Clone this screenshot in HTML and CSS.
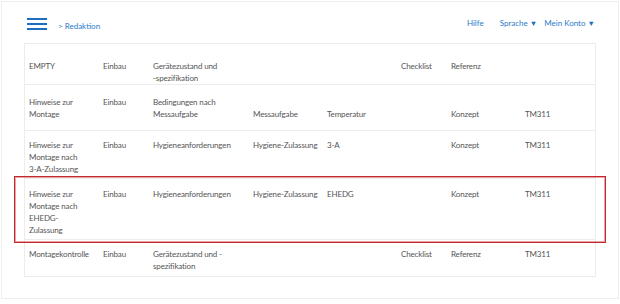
FILE: index.html
```html
<!DOCTYPE html>
<html lang="de">
<head>
<meta charset="utf-8">
<title>Redaktion</title>
<link rel="stylesheet" href="styles.css">
</head>
<body>
<div class="frame">
  <header class="topbar">
    <button class="burger" aria-label="Menü"><span></span><span></span><span></span></button>
    <nav class="crumb">&gt; Redaktion</nav>
    <nav class="menu">
      <a class="link hilfe">Hilfe</a>
      <a class="link sprache">Sprache <span class="caret">&#9660;</span></a>
      <a class="link konto">Mein Konto <span class="caret">&#9660;</span></a>
    </nav>
  </header>
  <div class="table">
    <div class="row r1">
      <div class="c">EMPTY</div>
      <div class="c">Einbau</div>
      <div class="c">Gerätezustand und <span class="nw">-spezifikation</span></div>
      <div class="c"></div>
      <div class="c"></div>
      <div class="c">Checklist</div>
      <div class="c">Referenz</div>
      <div class="c"></div>
    </div>
    <div class="row r2">
      <div class="c">Hinweise zur Montage</div>
      <div class="c">Einbau</div>
      <div class="c">Bedingungen nach Messaufgabe</div>
      <div class="c low">Messaufgabe</div>
      <div class="c low">Temperatur</div>
      <div class="c"></div>
      <div class="c low">Konzept</div>
      <div class="c low">TM311</div>
    </div>
    <div class="row r3">
      <div class="c">Hinweise zur Montage nach <span class="nw">3-A-Zulassung</span></div>
      <div class="c">Einbau</div>
      <div class="c">Hygieneanforderungen</div>
      <div class="c nw">Hygiene-Zulassung</div>
      <div class="c">3-A</div>
      <div class="c"></div>
      <div class="c">Konzept</div>
      <div class="c">TM311</div>
    </div>
    <div class="row r4 selected">
      <div class="c">Hinweise zur Montage nach EHEDG-Zulassung</div>
      <div class="c">Einbau</div>
      <div class="c">Hygieneanforderungen</div>
      <div class="c nw">Hygiene-Zulassung</div>
      <div class="c">EHEDG</div>
      <div class="c"></div>
      <div class="c">Konzept</div>
      <div class="c">TM311</div>
    </div>
    <div class="row r5">
      <div class="c">Montagekontrolle</div>
      <div class="c">Einbau</div>
      <div class="c">Gerätezustand und - spezifikation</div>
      <div class="c"></div>
      <div class="c"></div>
      <div class="c">Checklist</div>
      <div class="c">Referenz</div>
      <div class="c">TM311</div>
    </div>
  </div>
</div>
</body>
</html>
```
FILE: styles.css
```css
html, body {
  margin: 0;
  padding: 0;
  background: #ffffff;
}
body {
  font-family: Lato, "Open Sans", "Liberation Sans", sans-serif;
  font-size: 8px;
  color: #555555;
}
.frame {
  box-sizing: border-box;
  margin: 1px 0 0 1px;
  width: 618px;
  height: 298px;
  border: 1px solid #eeeeee;
  padding: 0 0 0 22px;
}
.topbar {
  display: flex;
  align-items: flex-start;
  height: 41px;
  width: 572px;
}
.burger {
  display: flex;
  flex-direction: column;
  gap: 3px;
  margin: 16px 0 0 3px;
  padding: 0;
  border: 0;
  background: none;
  width: 20px;
}
.burger span {
  display: block;
  width: 20px;
  height: 2px;
  background: #1b6fc0;
}
.crumb {
  margin: 18px 0 0 11px;
  line-height: 12px;
  color: #2a7bcb;
}
.menu {
  display: flex;
  margin: 15px 0 0 auto;
  padding-right: 1px;
  line-height: 12px;
}
.link {
  color: #2a7bcb;
  white-space: nowrap;
}
.sprache { margin-left: 16px; }
.konto { margin-left: 7px; }
.caret {
  font-size: 7.5px;
  color: #1b6fc0;
}
.table {
  box-sizing: border-box;
  width: 572px;
  border: 1px solid #ececec;
}
.row {
  display: grid;
  grid-template-columns: 74px 50px 100px 74px 74px 50px 74px 1fr;
  line-height: 12px;
  letter-spacing: -0.15px;
  border-bottom: 1px solid #ececec;
  box-sizing: border-box;
}
.row:last-child { border-bottom: 0; }
.c {
  padding: 0 10px 0 4px;
}
.nw { white-space: nowrap; }
.r1 { height: 41px; padding-top: 16px; }
.r2 { height: 46px; padding-top: 11px; }
.r3 { height: 48px; padding-top: 8px; }
.r4 { height: 61px; padding-top: 9px; }
.r5 { height: 36px; padding-top: 8px; }
.low { padding-top: 12px; }
.selected {
  position: relative;
}
.selected::after {
  content: "";
  position: absolute;
  left: -11px;
  right: -11px;
  top: -3px;
  bottom: -4px;
  border: 1px solid #c4262d;
  box-shadow: inset 0 0 0 1px rgba(214, 90, 95, 0.55);
  pointer-events: none;
}
```
